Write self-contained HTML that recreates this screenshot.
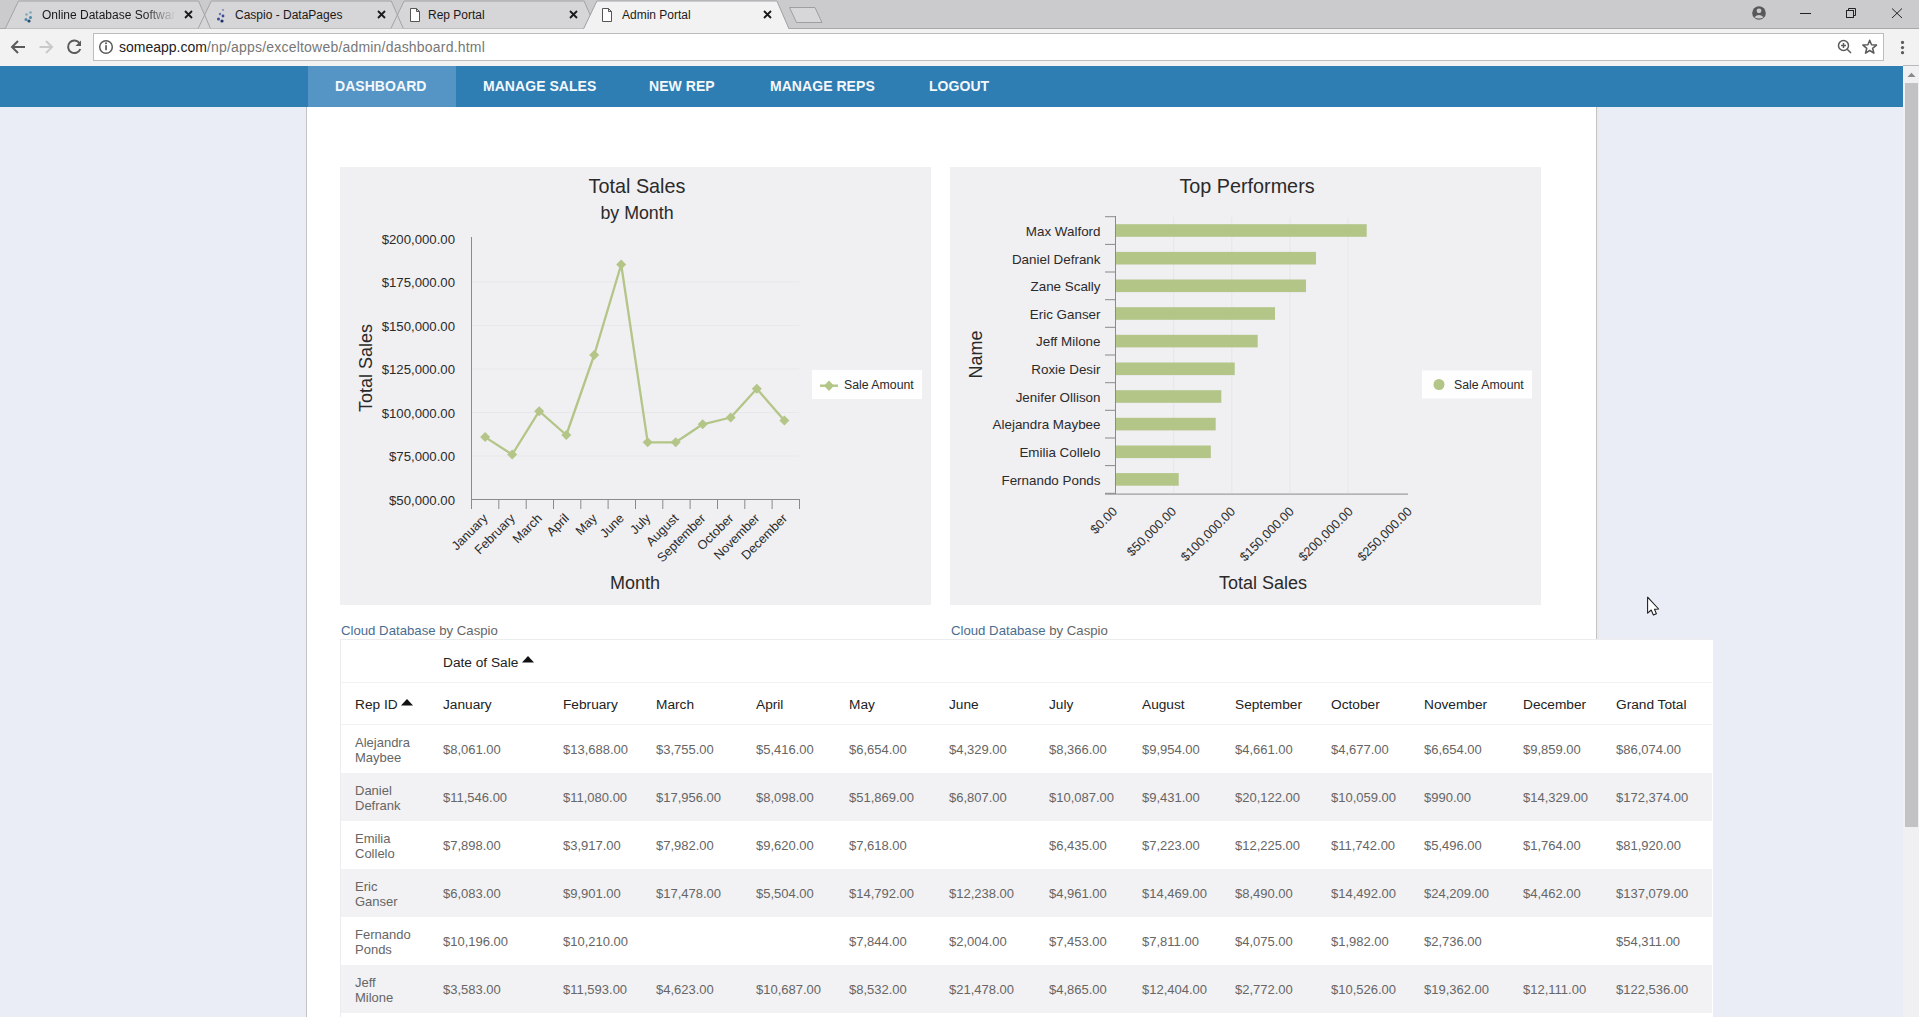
<!DOCTYPE html>
<html><head><meta charset="utf-8">
<style>
*{margin:0;padding:0;box-sizing:border-box}
html,body{width:1919px;height:1017px;overflow:hidden;background:#eaedf6;font-family:"Liberation Sans",sans-serif}
.abs{position:absolute}
#strip{left:0;top:0;width:1919px;height:29px;background:#cdcbcf}
#toolbar{left:0;top:29px;width:1919px;height:37px;background:#f2f2f2;border-top:1px solid #b9b8bb}
#addr{left:93px;top:34px;width:1791px;height:26px;background:#fff;border:1px solid #c6c6c6;border-radius:2px}
.tabtxt{font-size:12px;color:#1a1a1a;top:8px;white-space:nowrap}
#nav{left:0;top:66px;width:1903px;height:41px;background:#2e7db3}
#navact{left:308px;top:66px;width:148px;height:41px;background:#5595c6}
.navi{top:78px;font-size:14px;font-weight:bold;color:#f4f8fb;letter-spacing:0.05px;white-space:nowrap}
#content{left:306px;top:107px;width:1291px;height:910px;background:#fff;border-left:1px solid #c4c4c8;border-right:1px solid #c4c4c8;box-shadow:2px 0 0 #e9e9ec}
#scroll{left:1903px;top:65px;width:16px;height:952px;background:#f0eff1;border-top:1px solid #b9b8bb}
#thumb{left:1905px;top:83px;width:13px;height:744px;background:#c2c1c4}
.panel{top:167px;width:591px;height:438px;background:#f0eff2}
.foot{top:623px;font-size:13.2px;color:#666;white-space:nowrap}
.foot b{font-weight:normal;color:#4a6d8f}
#table{left:340px;top:640px;width:1373px;height:377px;background:#fff}

.t13{font-size:13.2px;fill:#2b2b2b}
.t13n{font-size:13.4px;fill:#2b2b2b}
.t12{font-size:12.7px;fill:#2b2b2b}
.lg{font-size:12.3px;fill:#2a2a2a}
.ttl{font-size:19.8px;fill:#2a2a2a}
.sub{font-size:17.8px;fill:#2a2a2a}
.axt{font-size:18px;fill:#2a2a2a}
.hd{font-size:13.7px;color:#222;white-space:nowrap}
.td{font-size:13px;color:#666;white-space:nowrap;line-height:15px}
</style></head><body>

<svg class="abs" style="left:0;top:0" width="1919" height="66" viewBox="0 0 1919 66">
 <rect x="0" y="0" width="1919" height="29" fill="#cbcacd"/>
 <rect x="0" y="28" width="1919" height="1" fill="#a9a8ab"/>
 <rect x="0" y="29" width="1919" height="37" fill="#f2f2f2"/>
 <!-- inactive tabs -->
 <path d="M5.3,28.5 L18.5,1 L198.5,1 L210.5,28.5 Z" fill="#d6d5d8"/>
 <path d="M198.1,28.5 L211.3,1 L391.3,1 L403.3,28.5 Z" fill="#d6d5d8"/>
 <path d="M390.9,28.5 L404.1,1 L584.1,1 L596.1,28.5 Z" fill="#d6d5d8"/>
 <path d="M5.3,28.5 L18.5,1 L198.5,1 L210.5,28.5" fill="none" stroke="#a3a2a5" stroke-width="1"/>
 <path d="M198.1,28.5 L211.3,1 L391.3,1 L403.3,28.5" fill="none" stroke="#a3a2a5" stroke-width="1"/>
 <path d="M390.9,28.5 L404.1,1 L584.1,1 L596.1,28.5" fill="none" stroke="#a3a2a5" stroke-width="1"/>
 <!-- active -->
 <path d="M583.7,29.5 L596.9,1 L776.9,1 L788.9,29.5 Z" fill="#f2f2f2"/>
 <path d="M583.7,28.5 L596.9,1 L776.9,1 L788.9,28.5" fill="none" stroke="#a3a2a5" stroke-width="1"/>
 <rect x="584.7" y="28" width="203.2" height="2" fill="#f2f2f2"/>
 <!-- new tab -->
 <path d="M789.5,7.5 L815,7.5 L822,22.5 L796.5,22.5 Z" fill="#d7d6d9" stroke="#9f9ea1" stroke-width="1"/>
 <!-- favicons -->
 <g fill="#4a8aa8"><circle cx="30.5" cy="12.5" r="1.3" opacity=".6"/><circle cx="26.5" cy="14.5" r="1.3" opacity=".6"/><circle cx="30.5" cy="17.5" r="1.5"/><circle cx="26" cy="19.5" r="1.5"/><circle cx="29" cy="21" r="1.6" fill="#1d4f73"/></g>
 <g fill="#3a4a9a"><circle cx="223" cy="10" r="1.1" opacity=".5"/><circle cx="220" cy="14" r="1.2" opacity=".7"/><circle cx="223" cy="16" r="1.4"/><circle cx="218.5" cy="19" r="1.5"/><circle cx="222" cy="21" r="1.6" fill="#1d2f6a"/></g>
 <!-- page icons -->
 <path d="M410.5,8.5 h6 l3,3 v10 h-9 z M416.5,8.5 v3 h3" fill="#fff" stroke="#555" stroke-width="1"/>
 <path d="M602.5,8.5 h6 l3,3 v10 h-9 z M608.5,8.5 v3 h3" fill="#fff" stroke="#555" stroke-width="1"/>
 <!-- close x -->
 <g stroke="#1a1a1a" stroke-width="1.8">
  <path d="M185,11 l7,7 M192,11 l-7,7"/>
  <path d="M378,11 l7,7 M385,11 l-7,7"/>
  <path d="M570,11 l7,7 M577,11 l-7,7"/>
  <path d="M764,11 l7,7 M771,11 l-7,7"/>
 </g>
 <!-- window controls -->
 <circle cx="1759" cy="13" r="6.8" fill="#58575a"/>
 <circle cx="1759" cy="10.8" r="2.4" fill="#cbcacd"/>
 <path d="M1754.3,17.2 Q1759,12.8 1763.7,17.2 Q1759,20 1754.3,17.2 Z" fill="#cbcacd"/>
 <rect x="1800" y="13" width="11" height="1" fill="#222"/>
 <g fill="none" stroke="#222" stroke-width="1">
  <rect x="1846.5" y="10.5" width="7" height="7"/>
  <path d="M1848.5,10.5 v-2 h7 v7 h-2"/>
  <path d="M1892,8.5 l10,9.5 M1902,8.5 l-10,9.5"/>
 </g>
 <!-- toolbar -->
 <g fill="none" stroke="#5a5a5a" stroke-width="2">
  <path d="M25,47 H12.5 M18,41 L12,47 L18,53"/>
 </g>
 <g fill="none" stroke="#c9c9c9" stroke-width="2">
  <path d="M39.5,47 H52 M46,41 L52,47 L46,53"/>
 </g>
 <path d="M79.6,43.2 A6.3,6.3 0 1 0 80.3,49" fill="none" stroke="#5a5a5a" stroke-width="2"/>
 <path d="M81,40.5 V46 H75.5 Z" fill="#5a5a5a"/>
 <rect x="93.5" y="33.5" width="1790" height="27" fill="#fff" stroke="#bdbdbd" stroke-width="1"/>
 <circle cx="106" cy="47" r="6.3" fill="none" stroke="#5a5a5a" stroke-width="1.5"/>
 <rect x="105.2" y="45.2" width="1.7" height="5" fill="#5a5a5a"/>
 <circle cx="106" cy="43.2" r="1" fill="#5a5a5a"/>
 <g fill="none" stroke="#5a5a5a" stroke-width="1.5">
  <circle cx="1843.5" cy="45.5" r="5"/>
  <path d="M1847.2,49.2 L1851,53 M1841,45.5 h5 M1843.5,43 v5"/>
 </g>
 <path d="M1869.7,40.2 L1871.5,44.8 L1876.5,45.1 L1872.6,48.3 L1873.9,53.2 L1869.7,50.5 L1865.5,53.2 L1866.8,48.3 L1862.9,45.1 L1867.9,44.8 Z" fill="none" stroke="#5a5a5a" stroke-width="1.5" stroke-linejoin="round"/>
 <g fill="#5a5a5a"><circle cx="1902.5" cy="42.4" r="1.6"/><circle cx="1902.5" cy="47.6" r="1.6"/><circle cx="1902.5" cy="52.7" r="1.6"/></g>
</svg>
<div class="abs tabtxt" style="left:42px;width:134px;overflow:hidden;-webkit-mask-image:linear-gradient(to right,#000 76%,transparent)">Online Database Software</div>
<div class="abs tabtxt" style="left:235px">Caspio - DataPages</div>
<div class="abs tabtxt" style="left:428px">Rep Portal</div>
<div class="abs tabtxt" style="left:622px">Admin Portal</div>
<div class="abs" style="left:119px;top:39px;font-size:14px;color:#222;white-space:nowrap">someapp.com<span style="color:#777;letter-spacing:0.2px">/np/apps/exceltoweb/admin/dashboard.html</span></div>
<div class="abs" id="nav"></div>
<div class="abs" id="navact"></div>
<div class="abs navi" style="left:335px">DASHBOARD</div>
<div class="abs navi" style="left:483px">MANAGE SALES</div>
<div class="abs navi" style="left:649px">NEW REP</div>
<div class="abs navi" style="left:770px">MANAGE REPS</div>
<div class="abs navi" style="left:929px">LOGOUT</div>
<div class="abs" id="scroll"></div>
<div class="abs" id="thumb"></div>
<svg class="abs" style="left:1907px;top:72px" width="9" height="6"><path d="M0.5,5 L4.5,0.8 L8.5,5 Z" fill="#8a898c"/></svg>
<div class="abs" id="content"></div>
<svg class="abs" style="left:340px;top:167px" width="591" height="438" viewBox="340 167 591 438">
<rect x="340" y="167" width="591" height="438" fill="#f0eff2"/>
<text x="455" y="243.8" class="t13" text-anchor="end">$200,000.00</text>
<rect x="472" y="281.5" width="327" height="1" fill="#e8e7ea"/>
<text x="455" y="287.3" class="t13" text-anchor="end">$175,000.00</text>
<rect x="472" y="325.0" width="327" height="1" fill="#e8e7ea"/>
<text x="455" y="330.8" class="t13" text-anchor="end">$150,000.00</text>
<rect x="472" y="368.5" width="327" height="1" fill="#e8e7ea"/>
<text x="455" y="374.3" class="t13" text-anchor="end">$125,000.00</text>
<rect x="472" y="412.0" width="327" height="1" fill="#e8e7ea"/>
<text x="455" y="417.8" class="t13" text-anchor="end">$100,000.00</text>
<rect x="472" y="455.5" width="327" height="1" fill="#e8e7ea"/>
<text x="455" y="461.3" class="t13" text-anchor="end">$75,000.00</text>
<text x="455" y="504.8" class="t13" text-anchor="end">$50,000.00</text>
<rect x="471" y="237" width="1" height="263" fill="#8a8a8d"/>
<rect x="471" y="499" width="329" height="1" fill="#8a8a8d"/>
<rect x="471.0" y="499" width="1" height="10" fill="#8a8a8d"/>
<rect x="498.3" y="499" width="1" height="10" fill="#8a8a8d"/>
<rect x="525.7" y="499" width="1" height="10" fill="#8a8a8d"/>
<rect x="553.0" y="499" width="1" height="10" fill="#8a8a8d"/>
<rect x="580.3" y="499" width="1" height="10" fill="#8a8a8d"/>
<rect x="607.6" y="499" width="1" height="10" fill="#8a8a8d"/>
<rect x="635.0" y="499" width="1" height="10" fill="#8a8a8d"/>
<rect x="662.3" y="499" width="1" height="10" fill="#8a8a8d"/>
<rect x="689.6" y="499" width="1" height="10" fill="#8a8a8d"/>
<rect x="717.0" y="499" width="1" height="10" fill="#8a8a8d"/>
<rect x="744.3" y="499" width="1" height="10" fill="#8a8a8d"/>
<rect x="771.6" y="499" width="1" height="10" fill="#8a8a8d"/>
<rect x="799.0" y="499" width="1" height="10" fill="#8a8a8d"/>
<polyline fill="none" stroke="#b3c587" stroke-width="2.3" stroke-linejoin="round" points="485.1,437.1 512.2,454.5 539.2,411.2 566.3,435 594.2,355 621.2,264.5 647.7,442.3 675.7,442.3 702.7,424.3 730.7,417.5 756.8,388.7 784.4,420.6"/>
<path d="M485.1,432.1 L490.1,437.1 L485.1,442.1 L480.1,437.1 Z" fill="#b3c587"/>
<path d="M512.2,449.5 L517.2,454.5 L512.2,459.5 L507.20000000000005,454.5 Z" fill="#b3c587"/>
<path d="M539.2,406.2 L544.2,411.2 L539.2,416.2 L534.2,411.2 Z" fill="#b3c587"/>
<path d="M566.3,430 L571.3,435 L566.3,440 L561.3,435 Z" fill="#b3c587"/>
<path d="M594.2,350 L599.2,355 L594.2,360 L589.2,355 Z" fill="#b3c587"/>
<path d="M621.2,259.5 L626.2,264.5 L621.2,269.5 L616.2,264.5 Z" fill="#b3c587"/>
<path d="M647.7,437.3 L652.7,442.3 L647.7,447.3 L642.7,442.3 Z" fill="#b3c587"/>
<path d="M675.7,437.3 L680.7,442.3 L675.7,447.3 L670.7,442.3 Z" fill="#b3c587"/>
<path d="M702.7,419.3 L707.7,424.3 L702.7,429.3 L697.7,424.3 Z" fill="#b3c587"/>
<path d="M730.7,412.5 L735.7,417.5 L730.7,422.5 L725.7,417.5 Z" fill="#b3c587"/>
<path d="M756.8,383.7 L761.8,388.7 L756.8,393.7 L751.8,388.7 Z" fill="#b3c587"/>
<path d="M784.4,415.6 L789.4,420.6 L784.4,425.6 L779.4,420.6 Z" fill="#b3c587"/>
<text class="t12" text-anchor="end" transform="translate(488.6,519) rotate(-45)">January</text>
<text class="t12" text-anchor="end" transform="translate(515.7,519) rotate(-45)">February</text>
<text class="t12" text-anchor="end" transform="translate(542.7,519) rotate(-45)">March</text>
<text class="t12" text-anchor="end" transform="translate(569.8,519) rotate(-45)">April</text>
<text class="t12" text-anchor="end" transform="translate(597.7,519) rotate(-45)">May</text>
<text class="t12" text-anchor="end" transform="translate(624.7,519) rotate(-45)">June</text>
<text class="t12" text-anchor="end" transform="translate(651.2,519) rotate(-45)">July</text>
<text class="t12" text-anchor="end" transform="translate(679.2,519) rotate(-45)">August</text>
<text class="t12" text-anchor="end" transform="translate(706.2,519) rotate(-45)">September</text>
<text class="t12" text-anchor="end" transform="translate(734.2,519) rotate(-45)">October</text>
<text class="t12" text-anchor="end" transform="translate(760.3,519) rotate(-45)">November</text>
<text class="t12" text-anchor="end" transform="translate(787.9,519) rotate(-45)">December</text>
<text x="637" y="193" class="ttl" text-anchor="middle">Total Sales</text>
<text x="637" y="219" class="sub" text-anchor="middle">by Month</text>
<text class="axt" text-anchor="middle" transform="translate(371.5,368) rotate(-90)">Total Sales</text>
<text x="635" y="588.5" class="axt" text-anchor="middle">Month</text>
<rect x="812" y="370" width="110" height="29" fill="#fefefe"/>
<rect x="820" y="384.5" width="18" height="2.4" fill="#b3c587"/>
<path d="M829,380.5 L834,385.7 L829,391 L824,385.7 Z" fill="#b3c587"/>
<text x="844" y="389" class="lg">Sale Amount</text>
</svg>
<svg class="abs" style="left:950px;top:167px" width="591" height="438" viewBox="950 167 591 438">
<rect x="950" y="167" width="591" height="438" fill="#f0eff2"/>
<rect x="1173.2" y="217" width="1" height="276" fill="#e6e5e8"/>
<rect x="1231.3" y="217" width="1" height="276" fill="#e6e5e8"/>
<rect x="1289.5" y="217" width="1" height="276" fill="#e6e5e8"/>
<rect x="1347.6" y="217" width="1" height="276" fill="#e6e5e8"/>
<rect x="1116" y="224.2" width="250.7" height="12.6" fill="#b3c587"/>
<text x="1100.5" y="235.8" class="t13n" text-anchor="end">Max Walford</text>
<rect x="1116" y="251.9" width="200.0" height="12.6" fill="#b3c587"/>
<text x="1100.5" y="263.5" class="t13n" text-anchor="end">Daniel Defrank</text>
<rect x="1116" y="279.5" width="190.0" height="12.6" fill="#b3c587"/>
<text x="1100.5" y="291.1" class="t13n" text-anchor="end">Zane Scally</text>
<rect x="1116" y="307.2" width="159.0" height="12.6" fill="#b3c587"/>
<text x="1100.5" y="318.8" class="t13n" text-anchor="end">Eric Ganser</text>
<rect x="1116" y="334.8" width="141.7" height="12.6" fill="#b3c587"/>
<text x="1100.5" y="346.4" class="t13n" text-anchor="end">Jeff Milone</text>
<rect x="1116" y="362.5" width="118.7" height="12.6" fill="#b3c587"/>
<text x="1100.5" y="374.1" class="t13n" text-anchor="end">Roxie Desir</text>
<rect x="1116" y="390.2" width="105.3" height="12.6" fill="#b3c587"/>
<text x="1100.5" y="401.8" class="t13n" text-anchor="end">Jenifer Ollison</text>
<rect x="1116" y="417.8" width="99.7" height="12.6" fill="#b3c587"/>
<text x="1100.5" y="429.4" class="t13n" text-anchor="end">Alejandra Maybee</text>
<rect x="1116" y="445.5" width="94.8" height="12.6" fill="#b3c587"/>
<text x="1100.5" y="457.1" class="t13n" text-anchor="end">Emilia Collelo</text>
<rect x="1116" y="473.1" width="62.7" height="12.6" fill="#b3c587"/>
<text x="1100.5" y="484.7" class="t13n" text-anchor="end">Fernando Ponds</text>
<rect x="1105" y="216.2" width="10" height="1" fill="#8a8a8d"/>
<rect x="1105" y="243.9" width="10" height="1" fill="#8a8a8d"/>
<rect x="1105" y="271.5" width="10" height="1" fill="#8a8a8d"/>
<rect x="1105" y="299.2" width="10" height="1" fill="#8a8a8d"/>
<rect x="1105" y="326.8" width="10" height="1" fill="#8a8a8d"/>
<rect x="1105" y="354.5" width="10" height="1" fill="#8a8a8d"/>
<rect x="1105" y="382.2" width="10" height="1" fill="#8a8a8d"/>
<rect x="1105" y="409.8" width="10" height="1" fill="#8a8a8d"/>
<rect x="1105" y="437.5" width="10" height="1" fill="#8a8a8d"/>
<rect x="1105" y="465.1" width="10" height="1" fill="#8a8a8d"/>
<rect x="1105" y="492.8" width="10" height="1" fill="#8a8a8d"/>
<rect x="1115" y="216" width="1" height="278" fill="#8a8a8d"/>
<rect x="1105" y="493.6" width="303" height="1" fill="#8a8a8d"/>
<text class="t12" text-anchor="end" transform="translate(1118.0,512.2) rotate(-45)">$0.00</text>
<text class="t12" text-anchor="end" transform="translate(1176.9,512.2) rotate(-45)">$50,000.00</text>
<text class="t12" text-anchor="end" transform="translate(1235.9,512.2) rotate(-45)">$100,000.00</text>
<text class="t12" text-anchor="end" transform="translate(1294.8,512.2) rotate(-45)">$150,000.00</text>
<text class="t12" text-anchor="end" transform="translate(1353.7,512.2) rotate(-45)">$200,000.00</text>
<text class="t12" text-anchor="end" transform="translate(1412.7,512.2) rotate(-45)">$250,000.00</text>
<text x="1247" y="193" class="ttl" text-anchor="middle">Top Performers</text>
<text class="axt" text-anchor="middle" transform="translate(982,354.5) rotate(-90)">Name</text>
<text x="1263" y="588.5" class="axt" text-anchor="middle">Total Sales</text>
<rect x="1422" y="370.5" width="110" height="28" fill="#fefefe"/>
<circle cx="1439" cy="384.5" r="5.5" fill="#b3c587"/>
<text x="1454" y="389" class="lg">Sale Amount</text>
</svg>
<div class="abs foot" style="left:341px"><b>Cloud Database</b> by Caspio</div>
<div class="abs foot" style="left:951px"><b>Cloud Database</b> by Caspio</div>
<div class="abs" id="table"></div>
<div class="abs" style="left:340px;top:639px;width:1373px;height:1px;background:#ececef"></div>
<div class="abs" style="left:341px;top:682px;width:1371px;height:1px;background:#f2f2f4"></div>
<div class="abs" style="left:341px;top:724px;width:1371px;height:1px;background:#f2f2f4"></div>
<div class="abs hd" style="left:443px;top:655px">Date of Sale</div>
<svg class="abs" style="left:522px;top:656px" width="12" height="7"><path d="M0,6.5 L6,0 L12,6.5 Z" fill="#111"/></svg>
<div class="abs hd" style="left:355px;top:697px">Rep ID</div>
<div class="abs hd" style="left:443px;top:697px">January</div>
<div class="abs hd" style="left:563px;top:697px">February</div>
<div class="abs hd" style="left:656px;top:697px">March</div>
<div class="abs hd" style="left:756px;top:697px">April</div>
<div class="abs hd" style="left:849px;top:697px">May</div>
<div class="abs hd" style="left:949px;top:697px">June</div>
<div class="abs hd" style="left:1049px;top:697px">July</div>
<div class="abs hd" style="left:1142px;top:697px">August</div>
<div class="abs hd" style="left:1235px;top:697px">September</div>
<div class="abs hd" style="left:1331px;top:697px">October</div>
<div class="abs hd" style="left:1424px;top:697px">November</div>
<div class="abs hd" style="left:1523px;top:697px">December</div>
<div class="abs hd" style="left:1616px;top:697px">Grand Total</div>
<svg class="abs" style="left:401px;top:699px" width="12" height="7"><path d="M0,6.5 L6,0 L12,6.5 Z" fill="#111"/></svg>
<div class="abs td nm" style="left:355px;top:735px">Alejandra<br>Maybee</div>
<div class="abs td" style="left:443px;top:742px">$8,061.00</div>
<div class="abs td" style="left:563px;top:742px">$13,688.00</div>
<div class="abs td" style="left:656px;top:742px">$3,755.00</div>
<div class="abs td" style="left:756px;top:742px">$5,416.00</div>
<div class="abs td" style="left:849px;top:742px">$6,654.00</div>
<div class="abs td" style="left:949px;top:742px">$4,329.00</div>
<div class="abs td" style="left:1049px;top:742px">$8,366.00</div>
<div class="abs td" style="left:1142px;top:742px">$9,954.00</div>
<div class="abs td" style="left:1235px;top:742px">$4,661.00</div>
<div class="abs td" style="left:1331px;top:742px">$4,677.00</div>
<div class="abs td" style="left:1424px;top:742px">$6,654.00</div>
<div class="abs td" style="left:1523px;top:742px">$9,859.00</div>
<div class="abs td" style="left:1616px;top:742px">$86,074.00</div>
<div class="abs" style="left:341px;top:773px;width:1371px;height:48px;background:#f2f1f3"></div>
<div class="abs td nm" style="left:355px;top:783px">Daniel<br>Defrank</div>
<div class="abs td" style="left:443px;top:790px">$11,546.00</div>
<div class="abs td" style="left:563px;top:790px">$11,080.00</div>
<div class="abs td" style="left:656px;top:790px">$17,956.00</div>
<div class="abs td" style="left:756px;top:790px">$8,098.00</div>
<div class="abs td" style="left:849px;top:790px">$51,869.00</div>
<div class="abs td" style="left:949px;top:790px">$6,807.00</div>
<div class="abs td" style="left:1049px;top:790px">$10,087.00</div>
<div class="abs td" style="left:1142px;top:790px">$9,431.00</div>
<div class="abs td" style="left:1235px;top:790px">$20,122.00</div>
<div class="abs td" style="left:1331px;top:790px">$10,059.00</div>
<div class="abs td" style="left:1424px;top:790px">$990.00</div>
<div class="abs td" style="left:1523px;top:790px">$14,329.00</div>
<div class="abs td" style="left:1616px;top:790px">$172,374.00</div>
<div class="abs td nm" style="left:355px;top:831px">Emilia<br>Collelo</div>
<div class="abs td" style="left:443px;top:838px">$7,898.00</div>
<div class="abs td" style="left:563px;top:838px">$3,917.00</div>
<div class="abs td" style="left:656px;top:838px">$7,982.00</div>
<div class="abs td" style="left:756px;top:838px">$9,620.00</div>
<div class="abs td" style="left:849px;top:838px">$7,618.00</div>
<div class="abs td" style="left:1049px;top:838px">$6,435.00</div>
<div class="abs td" style="left:1142px;top:838px">$7,223.00</div>
<div class="abs td" style="left:1235px;top:838px">$12,225.00</div>
<div class="abs td" style="left:1331px;top:838px">$11,742.00</div>
<div class="abs td" style="left:1424px;top:838px">$5,496.00</div>
<div class="abs td" style="left:1523px;top:838px">$1,764.00</div>
<div class="abs td" style="left:1616px;top:838px">$81,920.00</div>
<div class="abs" style="left:341px;top:869px;width:1371px;height:48px;background:#f2f1f3"></div>
<div class="abs td nm" style="left:355px;top:879px">Eric<br>Ganser</div>
<div class="abs td" style="left:443px;top:886px">$6,083.00</div>
<div class="abs td" style="left:563px;top:886px">$9,901.00</div>
<div class="abs td" style="left:656px;top:886px">$17,478.00</div>
<div class="abs td" style="left:756px;top:886px">$5,504.00</div>
<div class="abs td" style="left:849px;top:886px">$14,792.00</div>
<div class="abs td" style="left:949px;top:886px">$12,238.00</div>
<div class="abs td" style="left:1049px;top:886px">$4,961.00</div>
<div class="abs td" style="left:1142px;top:886px">$14,469.00</div>
<div class="abs td" style="left:1235px;top:886px">$8,490.00</div>
<div class="abs td" style="left:1331px;top:886px">$14,492.00</div>
<div class="abs td" style="left:1424px;top:886px">$24,209.00</div>
<div class="abs td" style="left:1523px;top:886px">$4,462.00</div>
<div class="abs td" style="left:1616px;top:886px">$137,079.00</div>
<div class="abs td nm" style="left:355px;top:927px">Fernando<br>Ponds</div>
<div class="abs td" style="left:443px;top:934px">$10,196.00</div>
<div class="abs td" style="left:563px;top:934px">$10,210.00</div>
<div class="abs td" style="left:849px;top:934px">$7,844.00</div>
<div class="abs td" style="left:949px;top:934px">$2,004.00</div>
<div class="abs td" style="left:1049px;top:934px">$7,453.00</div>
<div class="abs td" style="left:1142px;top:934px">$7,811.00</div>
<div class="abs td" style="left:1235px;top:934px">$4,075.00</div>
<div class="abs td" style="left:1331px;top:934px">$1,982.00</div>
<div class="abs td" style="left:1424px;top:934px">$2,736.00</div>
<div class="abs td" style="left:1616px;top:934px">$54,311.00</div>
<div class="abs" style="left:341px;top:965px;width:1371px;height:48px;background:#f2f1f3"></div>
<div class="abs td nm" style="left:355px;top:975px">Jeff<br>Milone</div>
<div class="abs td" style="left:443px;top:982px">$3,583.00</div>
<div class="abs td" style="left:563px;top:982px">$11,593.00</div>
<div class="abs td" style="left:656px;top:982px">$4,623.00</div>
<div class="abs td" style="left:756px;top:982px">$10,687.00</div>
<div class="abs td" style="left:849px;top:982px">$8,532.00</div>
<div class="abs td" style="left:949px;top:982px">$21,478.00</div>
<div class="abs td" style="left:1049px;top:982px">$4,865.00</div>
<div class="abs td" style="left:1142px;top:982px">$12,404.00</div>
<div class="abs td" style="left:1235px;top:982px">$2,772.00</div>
<div class="abs td" style="left:1331px;top:982px">$10,526.00</div>
<div class="abs td" style="left:1424px;top:982px">$19,362.00</div>
<div class="abs td" style="left:1523px;top:982px">$12,111.00</div>
<div class="abs td" style="left:1616px;top:982px">$122,536.00</div>
<div class="abs" style="left:340px;top:640px;width:1px;height:377px;background:#ececef"></div>
<svg class="abs" style="left:1646px;top:596px" width="14" height="21"><path d="M1.6,1.2 L1.6,17.2 L5.2,14 L7.4,19 L10.4,17.8 L8.5,13.3 L12.6,13 Z" fill="#fff" stroke="#1a1a1a" stroke-width="1.05" stroke-linejoin="round"/></svg>
</body></html>
